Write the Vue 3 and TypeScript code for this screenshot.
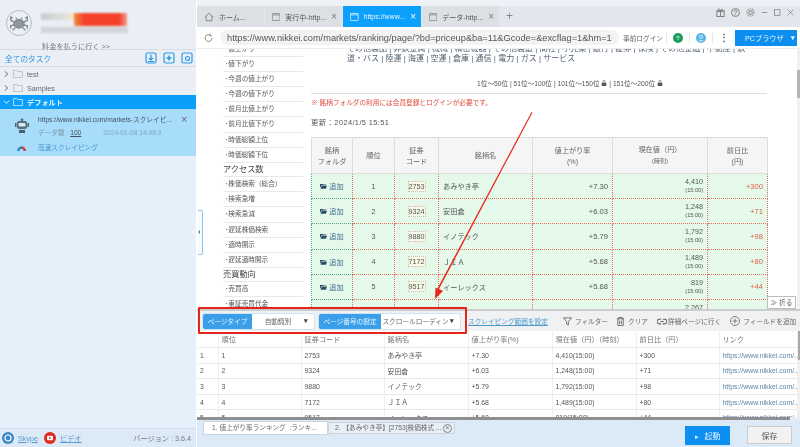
<template>
  <div class="app">
    <!-- 左サイドバー -->
    <aside class="side">
      <div class="user">
        <div class="avatar">
          <svg viewBox="0 0 26 26" width="24" height="24" fill="none" stroke="#7d8590" stroke-width="1.4">
            <ellipse cx="13" cy="14" rx="5.5" ry="4.5" fill="#8f969e" />
            <path d="M8 12 4 10V6M18 12l4-2V6M4 6l2 2M22 6l-2 2M8 15l-4 1v3M18 15l4 1v3M9 18l-3 3M17 18l3 3M10 9V7M16 9V7" />
          </svg>
        </div>
        <div class="user-body">
          <div class="name-row">
            <span class="mosaic-grey"></span>
            <span class="mosaic-red"></span>
          </div>
          <div class="mosaic-line"></div>
        </div>
        <div class="pay">料金を払うに行く &gt;&gt;</div>
      </div>

      <div class="all-tasks">
        <span>全てのタスク</span>
        <div class="task-icons">
          <svg v-for="n in 3" :key="n" viewBox="0 0 12 12" width="12" height="12" fill="none" stroke="#2a9ae6" stroke-width="1.2">
            <rect x="1" y="1" width="10" height="10" rx="1.5" />
            <path v-if="n === 1" d="M6 2.5v5M4 6l2 2 2-2M3 9.5h6" />
            <path v-if="n === 2" d="M6 3.5v5M3.5 6h5" stroke-width="1.5" />
            <circle v-if="n === 3" cx="6.5" cy="6.5" r="2" />
          </svg>
        </div>
      </div>

      <div v-for="f in folders" :key="f" class="folder">
        <svg class="chev" viewBox="0 0 8 8" width="7" height="8" fill="none" stroke="#666" stroke-width="1"><path d="M2 1l3.500 3L2 7" /></svg>
        <svg class="dir" viewBox="0 0 12 10" width="10" height="8" fill="none" stroke="#b5b5b5"><path d="M.5.500h4l1 1.500h6v7.500H.5z" /></svg>
        <span>{{ f }}</span>
      </div>
      <div class="folder folder-on">
        <svg class="chev" viewBox="0 0 8 8" width="7" height="8" fill="none" stroke="#fff" stroke-width="1"><path d="M1 2.500l3 3 3-3" /></svg>
        <svg class="dir" viewBox="0 0 12 10" width="10" height="8" fill="none" stroke="#d8f0ff"><path d="M.5.500h4l1 1.500h6v7.500H.5z" /></svg>
        <span>デフォルト</span>
      </div>

      <div class="task">
        <svg class="robot" viewBox="0 0 14 16" width="14" height="16">
          <circle cx="7" cy="1.800" r="1.300" fill="#4a6070" />
          <rect x="2" y="3" width="10" height="8" rx="2" fill="#56707f" />
          <rect x="3.500" y="5" width="7" height="3.500" rx="1" fill="#dce8ef" />
          <rect x="0" y="5" width="1.500" height="4" fill="#4a6070" />
          <rect x="12.500" y="5" width="1.500" height="4" fill="#4a6070" />
          <path d="M4 12h6v3H4z" fill="#4a6070" />
        </svg>
        <div class="task-url">https://www.nikkei.com/markets-スクレイピ...</div>
        <span class="task-x">×</span>
        <div class="task-meta">データ数 : <u>100</u><span class="task-date">2024-01-08 14:48:9</span></div>
        <div class="task-speed">
          <svg viewBox="0 0 12 10" width="11" height="9">
            <path d="M1 9a5 5 0 0 1 10 0H8.500a2.500 2.500 0 0 0-5 0z" fill="#2180c9" />
            <path d="M6 4a5 5 0 0 1 5 5H8.500A2.500 2.500 0 0 0 6 6.500z" fill="#e33b2e" />
          </svg>
          <span>高速スクレイピング</span>
        </div>
      </div>

      <div class="side-fill"></div>

      <div class="side-foot">
        <svg viewBox="0 0 12 12" width="12" height="12"><circle cx="6" cy="6" r="6" fill="#3c88c4" /><circle cx="6" cy="6" r="3" fill="none" stroke="#fff" stroke-width="1.200" /></svg>
        <a class="foot-link">Skype</a>
        <svg class="yt" viewBox="0 0 12 12" width="12" height="12"><circle cx="6" cy="6" r="6" fill="#e0281c" /><rect x="3" y="3.800" width="6" height="4.400" rx="1" fill="#fff" /><path d="M5.200 4.800 7.200 6l-2 1.200z" fill="#e0281c" /></svg>
        <a class="foot-link">ビデオ</a>
        <span class="version">バージョン : 3.6.4</span>
      </div>
    </aside>

    <div class="main">
      <!-- タブ -->
      <div class="tabs">
        <div v-for="t in tabs" :key="t.label" class="tab" :class="t.cls">
          <svg v-if="t.home" viewBox="0 0 12 12" width="10" height="10" fill="none" stroke="#777"><path d="M1 6 6 1.500 11 6M2.500 5v5.500h7V5" /></svg>
          <svg v-else viewBox="0 0 12 12" width="10" height="10" fill="none" :stroke="t.cls === 'tab-on' ? '#fff' : '#777'"><rect x=".5" y="1" width="11" height="10" rx="1" /><path d="M.5 3h11" /></svg>
          <span class="tab-label">{{ t.label }}</span>
          <span v-if="!t.home" class="tab-x">×</span>
        </div>
        <span class="plus">+</span>
        <div class="win">
          <svg viewBox="0 0 10 10" width="9" height="9" fill="none" stroke="#777"><rect x="1" y="3.500" width="8" height="6" /><path d="M.5 3.500h9M5 3.500v6M5 3C4 .5 2 .5 2.500 2S5 3 5 3s2-1.500 2.500-1S6 .5 5 3" /></svg>
          <svg viewBox="0 0 10 10" width="9" height="9" fill="none" stroke="#777"><circle cx="5" cy="5" r="4.400" /><path d="M3.600 4c0-2 2.800-2 2.800-.2C6.400 5 5 5 5 6.200M5 7v1" /></svg>
          <svg viewBox="0 0 10 10" width="9" height="9" fill="none" stroke="#999" stroke-width="1.400"><circle cx="5" cy="5" r="2" /><circle cx="5" cy="5" r="4" stroke-dasharray="1.500 1" /></svg>
          <svg viewBox="0 0 10 10" width="7" height="9" fill="none" stroke="#777"><path d="M1 5h8" /></svg>
          <svg viewBox="0 0 10 10" width="7" height="9" fill="none" stroke="#777"><rect x=".5" y="1" width="8" height="8" /></svg>
          <svg viewBox="0 0 10 10" width="7" height="9" fill="none" stroke="#777"><path d="M1 1l8 8M9 1l-8 8" /></svg>
        </div>
      </div>

      <!-- アドレスバー -->
      <div class="urlbar">
        <svg class="reload" viewBox="0 0 12 12" width="10" height="10" fill="none" stroke="#666"><path d="M10.500 6A4.500 4.500 0 1 1 8 2M8 .5V3h2.500" /></svg>
        <div class="url">
          <span>https://www.nikkei.com/markets/ranking/page/?bd=priceup&amp;ba=11&amp;Gcode=&amp;excflag=1&amp;hm=1</span>
          <svg viewBox="0 0 10 10" width="8" height="8" fill="none" stroke="#aaa"><path d="M1 9l1-3 5-5 2 2-5 5z" /></svg>
        </div>
        <span class="pre-login">事前ログイン</span>
        <i class="vsep vsep-first"></i>
        <svg class="dot" viewBox="0 0 10 10" width="10" height="10"><circle cx="5" cy="5" r="5" fill="#1d9c5c" /><path d="M3 4.500 5 3l2 1.500M5 3v4" fill="none" stroke="#bfe8d0" stroke-width=".8" /></svg>
        <i class="vsep"></i>
        <svg class="dot" viewBox="0 0 10 10" width="10" height="10"><circle cx="5" cy="5" r="5" fill="#58b6e4" /><circle cx="5" cy="3.800" r="1.500" fill="none" stroke="#e6f6ff" stroke-width=".8" /><path d="M2.800 7.800h4.400" stroke="#e6f6ff" stroke-width=".9" /></svg>
        <i class="vsep"></i>
        <span class="more">⋮</span>
        <div class="pc-btn"><span>PCブラウザ</span><b>▾</b></div>
      </div>

      <!-- ページ本体 -->
      <div class="page">
        <nav class="nav">
          <template v-for="n in nav" :key="n.text">
            <div v-if="n.head" class="nav-head">{{ n.text }}</div>
            <div v-else class="nav-item">･{{ n.text }}</div>
          </template>
        </nav>
        <div class="content">
          <p class="cats">その他製品 | 非鉄金属 | 機械 | 精密機器 | その他製造 | 商社 | 小売業 | 銀行 | 証券 | 保険 | その他金融 | 不動産 | 鉄<br />道・バス | 陸運 | 海運 | 空運 | 倉庫 | 通信 | 電力 | ガス | サービス</p>
          <p class="pager">
            1位～50位 | 51位～100位 | 101位～150位
            <svg viewBox="0 0 8 8" width="6" height="6" fill="#555"><path d="M1 3.500h6V8H1zM2.200 3.500V2a1.800 1.800 0 0 1 3.600 0v1.500H5V2a1 1 0 0 0-2 0v1.500z" /></svg>
            | 151位～200位
            <svg viewBox="0 0 8 8" width="6" height="6" fill="#555"><path d="M1 3.500h6V8H1zM2.200 3.500V2a1.800 1.800 0 0 1 3.600 0v1.500H5V2a1 1 0 0 0-2 0v1.500z" /></svg>
          </p>
          <p class="note">※ 銘柄フォルダの利用には会員登録とログインが必要です。</p>
          <p class="updated">更新：2024/1/5 15:51</p>
          <table class="rank">
            <colgroup><col v-for="w in rankCols" :key="w" :class="'w' + w" /></colgroup>
            <thead>
              <tr>
                <th>銘柄<br />フォルダ</th>
                <th>順位</th>
                <th>証券<br />コード</th>
                <th>銘柄名</th>
                <th>値上がり率<br />(%)</th>
                <th>現在値（円）<br /><small>(時刻)</small></th>
                <th>前日比<br />(円)</th>
              </tr>
            </thead>
            <tbody>
              <tr v-for="r in rows" :key="r.no">
                <td class="add">
                  <svg viewBox="0 0 10 8" width="7" height="6" fill="#2b4b63"><path d="M0 1h4l1 1h4v1H2L0 7zM2.500 3.500H10L8.500 8H.800z" /></svg>
                  追加
                </td>
                <td class="c">{{ r.no }}</td>
                <td class="c"><span class="code">{{ r.code }}</span></td>
                <td>{{ r.name }}</td>
                <td class="r num">{{ r.rate }}</td>
                <td class="r price">{{ r.price }}<small>(15:00)</small></td>
                <td class="r num up">{{ r.diff }}</td>
              </tr>
            </tbody>
          </table>
        </div>
        <div class="page-bar"><i></i></div>
        <div class="fold-btn">≫ 折る</div>
      </div>

      <!-- 下部パネル -->
      <div class="toolbar">
        <div class="sel">
          <span class="sel-label l1">ページタイプ</span>
          <span class="sel-val">自動識別</span>
          <b>▾</b>
        </div>
        <div class="sel sel2">
          <span class="sel-label l2">ページ番号の設定</span>
          <span class="sel-val">スクロールローディン</span>
          <b>▾</b>
        </div>
        <a class="range">スクレイピング範囲を設定</a>
        <div class="tool t-filter">
          <svg viewBox="0 0 10 10" width="9" height="9" fill="none" stroke="#666"><path d="M.5 1h9L6 5v4L4 8V5z" /></svg>フィルター
        </div>
        <div class="tool t-clear">
          <svg viewBox="0 0 10 10" width="9" height="9" fill="none" stroke="#666"><path d="M1 2h8M3 2V.5h4V2M2 2v7.500h6V2M4 4v4M6 4v4" /></svg>クリア
        </div>
        <div class="tool t-link">
          <svg viewBox="0 0 12 8" width="10" height="7" fill="none" stroke="#666" stroke-width="1.300"><path d="M5 1.200H3a2.800 2.800 0 0 0 0 5.600h2M7 1.200h2a2.800 2.800 0 0 1 0 5.600H7M4 4h4" /></svg>詳細ページに行く
        </div>
        <div class="tool t-add">
          <svg viewBox="0 0 10 10" width="10" height="10" fill="none" stroke="#666" stroke-width=".8"><circle cx="5" cy="5" r="4.500" /><path d="M5 2.500v5M2.500 5h5" /></svg>フィールドを追加
        </div>
      </div>

      <div class="grid-wrap">
        <table class="grid">
          <colgroup><col class="g0" /><col class="g1" /><col class="g1" /><col class="g2" /><col class="g2" /><col class="g2" /><col class="g1" /><col class="g3" /></colgroup>
          <thead>
            <tr><th></th><th>順位</th><th>証券コード</th><th>銘柄名</th><th>値上がり率(%)</th><th>現在値（円）（時刻）</th><th>前日比（円）</th><th>リンク</th></tr>
          </thead>
          <tbody>
            <tr v-for="r in rows.slice(0, 5)" :key="r.no">
              <td>{{ r.no }}</td>
              <td>{{ r.no }}</td>
              <td>{{ r.code }}</td>
              <td>{{ r.name }}</td>
              <td>{{ r.rate }}</td>
              <td>{{ r.price }}(15:00)</td>
              <td>{{ r.diff }}</td>
              <td class="lnk">https://www.nikkei.com/...</td>
            </tr>
          </tbody>
        </table>
        <div class="grid-vbar"><i></i></div>
      </div>
      <div class="grid-hbar"></div>

      <div class="foot">
        <div class="sheet sheet-on">1. 値上がり率ランキング &nbsp;:ランキ...</div>
        <div class="sheet">2. 【あみやき亭】[2753]株価株式 ...<span class="sheet-x">×</span></div>
        <button class="start"><span>▸</span>起動</button>
        <button class="save">保存</button>
      </div>
    </div>

    <!-- 注釈（赤枠と矢印）と折りたたみハンドル -->
    <div class="collapse"></div>
    <div class="red-box"></div>
    <svg class="arrow" viewBox="0 0 800 447" width="800" height="447">
      <polygon points="531.500,112 532.500,112.500 439,289 443,291 435,299 435.500,287.500 437.500,288.500" fill="#e8281c" />
    </svg>
  </div>
</template>

<script setup lang="ts">
interface Row {
  no: number
  code: string
  name: string
  rate: string
  price: string
  diff: string
}

interface Tab {
  label: string
  cls: string
  home?: boolean
}

const folders = ['test', 'Samples']

const tabs: Tab[] = [
  { label: 'ホーム...', cls: 'tab-home', home: true },
  { label: '実行中-http...', cls: 'tab-run' },
  { label: 'https://www...', cls: 'tab-on' },
  { label: 'データ-http...', cls: 'tab-data' },
]

const nav = [
  { text: '値上がり' },
  { text: '値下がり' },
  { text: '今週の値上がり' },
  { text: '今週の値下がり' },
  { text: '前月比値上がり' },
  { text: '前月比値下がり' },
  { text: '時価総額上位' },
  { text: '時価総額下位' },
  { text: 'アクセス数', head: true },
  { text: '株価検索（総合）' },
  { text: '検索急増' },
  { text: '検索急減' },
  { text: '遅延株価検索' },
  { text: '適時開示' },
  { text: '遅延適時開示' },
  { text: '売買動向', head: true },
  { text: '売買高' },
  { text: '東証売買代金' },
]

const rankCols = [41, 42, 44, 94, 80, 95, 60]

const rows: Row[] = [
  { no: 1, code: '2753', name: 'あみやき亭', rate: '+7.30', price: '4,410', diff: '+300' },
  { no: 2, code: '9324', name: '安田倉', rate: '+6.03', price: '1,248', diff: '+71' },
  { no: 3, code: '9880', name: 'イノテック', rate: '+5.79', price: '1,792', diff: '+98' },
  { no: 4, code: '7172', name: 'ＪＩＡ', rate: '+5.68', price: '1,489', diff: '+80' },
  { no: 5, code: '9517', name: 'イーレックス', rate: '+5.68', price: '819', diff: '+44' },
  { no: 6, code: '6547', name: 'グリムス', rate: '+5.67', price: '2,267', diff: '+121' },
]
</script>

<style>
html,
body {
  margin: 0;
  overflow: hidden;
}
</style>

<style scoped>
.app {
  position: relative;
  display: flex;
  width: 800px;
  height: 447px;
  overflow: hidden;
  background: #fff;
  color: #555;
  font-family: "Liberation Sans", "Noto Sans CJK JP", sans-serif;
  font-size: 7.2px;
  filter: blur(0.3px);
}

/* ── サイドバー ── */
.side {
  width: 196px;
  margin-right: 1px;
  flex-shrink: 0;
  display: flex;
  flex-direction: column;
  background: #eaeff6;
}

.user {
  position: relative;
  height: 50px;
  box-sizing: border-box;
  border-bottom: 1px solid #d8dce2;
  padding: 10px 0 0 6px;
  display: flex;
}

.avatar {
  width: 26px;
  height: 26px;
  box-sizing: border-box;
  border: 1px solid #bbb;
  border-radius: 50%;
  display: flex;
  align-items: center;
  justify-content: center;
  overflow: hidden;
  flex-shrink: 0;
}

.user-body {
  margin: 3px 0 0 9px;
  filter: blur(1px);
}

.name-row {
  display: flex;
  height: 11px;
}

.mosaic-grey {
  width: 33px;
  height: 7px;
  background: linear-gradient(90deg, #c9ccd0, #dcdcdc 60%, #f6e3c8);
}

.mosaic-red {
  width: 53px;
  height: 13px;
  background: linear-gradient(90deg, #ef8a3c, #f5402a 20%, #f5402a 85%, #f59a8c);
}

.mosaic-line {
  width: 87px;
  height: 6px;
  margin-top: 3px;
  background: #d2d5da;
}

.pay {
  position: absolute;
  left: 42px;
  top: 41px;
  color: #777;
}

.all-tasks {
  height: 17px;
  box-sizing: border-box;
  border-bottom: 1px solid #d8dce2;
  padding: 0 3px 0 5px;
  display: flex;
  align-items: center;
  justify-content: space-between;
  color: #2a9ae6;
  font-size: 7.7px;
}

.task-icons {
  display: flex;
  gap: 6px;
}

.folder {
  height: 14px;
  display: flex;
  align-items: center;
  padding-left: 3px;
  color: #666;
}

.chev {
  margin-right: 3px;
}

.dir {
  margin-right: 4px;
}

.folder-on {
  background: #0b9ffb;
  color: #e8f6ff;
  font-weight: 700;
}

.task {
  position: relative;
  height: 47px;
  box-sizing: border-box;
  background: #a7dcfb;
  padding: 5px 0 0 38px;
  font-size: 6.67px;
}

.robot {
  position: absolute;
  left: 15px;
  top: 9px;
}

.task-url {
  color: #44525f;
  line-height: 11px;
  white-space: nowrap;
}

.task-x {
  position: absolute;
  left: 181px;
  top: 4px;
  font-size: 11px;
  color: #667;
}

.task-meta {
  margin-top: 3px;
  color: #7c95a8;
  line-height: 10px;
}

.task-meta u {
  color: #44525f;
}

.task-date {
  margin-left: 22px;
  color: #86a6bd;
}

.task-speed {
  margin: 4px 0 0 -22px;
  height: 10px;
  display: flex;
  align-items: center;
  gap: 11px;
  color: #4a97cc;
}

.side-fill {
  flex: 1;
  background: #e6f0fa;
}

.side-foot {
  height: 18px;
  border-top: 1px solid #cddff0;
  background: #dce9f6;
  display: flex;
  align-items: center;
  padding: 0 5px 0 2px;
}

.foot-link {
  margin-left: 4px;
  color: #5a9ad0;
  text-decoration: underline;
}

.yt {
  margin-left: 6px;
}

.version {
  margin-left: auto;
  color: #777;
}

/* ── タブ ── */
.main {
  flex: 1;
  min-width: 0;
  display: flex;
  flex-direction: column;
}

.tabs {
  height: 27px;
  box-sizing: border-box;
  padding-top: 6px;
  display: flex;
  background: linear-gradient(#eef1f6 6px, #e3e7ed 6px);
}

.tab {
  height: 21px;
  box-sizing: border-box;
  margin-right: 1px;
  padding: 0 5px 0 7px;
  display: flex;
  align-items: center;
  gap: 5px;
  background: #dcdfe4;
  color: #555;
  font-size: 7px;
}

.tab-home {
  width: 67px;
}

.tab-run {
  width: 77px;
}

.tab-on {
  width: 78px;
  background: #0ba0fb;
  color: #e5f5ff;
}

.tab-data {
  width: 77px;
}

.tab-label {
  flex: 1;
  white-space: nowrap;
}

.tab-x {
  font-size: 10px;
  color: #777;
}

.tab-on .tab-x {
  color: #fff;
}

.plus {
  margin: 3px 0 0 6px;
  font-size: 12px;
  color: #888;
}

.win {
  margin-left: auto;
  height: 12px;
  padding-right: 6px;
  display: flex;
  align-items: center;
  gap: 6px;
}

/* ── アドレスバー ── */
.urlbar {
  height: 22px;
  flex-shrink: 0;
  box-sizing: border-box;
  background: #fff;
  border-bottom: 1px solid #eee;
  display: flex;
  align-items: center;
  padding: 0 3px 0 7px;
}

.reload {
  margin-right: 7px;
}

.url {
  width: 399px;
  height: 15px;
  flex-shrink: 0;
  box-sizing: border-box;
  border-radius: 8px;
  background: #f3f3f3;
  padding: 0 6px 0 7px;
  display: flex;
  align-items: center;
  justify-content: space-between;
  color: #555;
  font-size: 9.25px;
  white-space: nowrap;
}

.pre-login {
  margin-left: 4px;
  color: #666;
  font-size: 6.67px;
  white-space: nowrap;
}

.vsep {
  width: 1px;
  height: 10px;
  margin: 0 6px;
  flex-shrink: 0;
  background: #e4e4e4;
}

.vsep-first {
  margin-left: 3px;
}

.dot {
  flex-shrink: 0;
}

.more {
  width: 8px;
  margin-right: 8px;
  text-align: center;
  font-size: 10px;
  font-weight: 700;
  color: #555;
}

.pc-btn {
  width: 62px;
  height: 16px;
  flex-shrink: 0;
  background: #0c8ff0;
  color: #e8f5ff;
  display: flex;
  align-items: center;
  justify-content: space-between;
  padding: 0 2px 0 10px;
  box-sizing: border-box;
}

/* ── ページ ── */
.page {
  position: relative;
  height: 260px;
  flex-shrink: 0;
  display: flex;
  overflow: hidden;
  background: #fff;
}

.nav {
  width: 80px;
  margin: -7px 0 0 26px;
  flex-shrink: 0;
}

.nav-item {
  height: 15.1px;
  box-sizing: border-box;
  border-bottom: 1px solid #e8e8e8;
  padding-left: 2px;
  line-height: 14px;
  font-size: 6.67px;
  color: #555;
  white-space: nowrap;
}

.nav-head {
  height: 13.5px;
  line-height: 14px;
  font-size: 8.2px;
  color: #444;
  border-bottom: 1px solid #e8e8e8;
}

.content {
  width: 456px;
  margin: -5px 0 0 8px;
  flex-shrink: 0;
}

.content p {
  margin: 0;
}

.content .cats {
  line-height: 10px;
  font-size: 8px;
  color: #4f5f70;
  padding-left: 36px;
  height: 20px;
  white-space: nowrap;
}

.content .pager {
  padding: 15px 0 4px 62px;
  border-bottom: 1px solid #ddd;
  text-align: center;
  font-size: 6.67px;
  line-height: 10px;
  color: #555;
}

.content .note {
  margin-top: 4px;
  color: #e0493c;
  font-size: 6.67px;
  line-height: 10px;
}

.content .updated {
  margin-top: 10px;
  font-size: 7.4px;
  letter-spacing: 0.4px;
  line-height: 10px;
  color: #555;
}

.rank {
  margin-top: 9px;
  width: 456px;
  table-layout: fixed;
  border-collapse: collapse;
  color: #555;
}

.w41 { width: 41px; }
.w42 { width: 42px; }
.w44 { width: 44px; }
.w94 { width: 94px; }
.w80 { width: 80px; }
.w95 { width: 95px; }
.w60 { width: 60px; }

.rank th {
  height: 35px;
  padding: 0;
  background: #f5f5f5;
  border: 1px solid #dcdcdc;
  font-weight: 400;
  line-height: 11px;
  color: #666;
}

.rank th small {
  font-size: 6px;
}

.rank td {
  height: 24.2px;
  padding: 0 4px;
  background: #e4f9ea;
  border: 1px dotted #e4705f;
  white-space: nowrap;
}

.rank td.add {
  border-color: #4cae73;
  border-right-color: #e4705f;
  text-align: center;
  color: #3f6d8f;
  padding: 0;
}

.c {
  text-align: center;
}

.code {
  outline: 1px dotted #e9b9a0;
  background: #f4f9e8;
}

.r {
  text-align: right;
}

.num {
  font-size: 7.6px;
}

.price {
  line-height: 8px;
}

.price small {
  display: block;
  font-size: 5.6px;
}

.up {
  color: #e2604a;
}

.page-bar {
  position: absolute;
  right: 0;
  top: 0;
  bottom: 0;
  width: 3px;
  background: #eef1f6;
}

.page-bar i {
  display: block;
  margin-top: 21px;
  height: 28px;
  background: #b5b5b5;
}

.fold-btn {
  position: absolute;
  right: 4px;
  top: 247px;
  width: 29px;
  height: 13px;
  box-sizing: border-box;
  border: 1px solid #bbb;
  background: #fff;
  color: #666;
  font-size: 6.67px;
  line-height: 11px;
  text-align: center;
}

/* ── ツールバー ── */
.toolbar {
  height: 22px;
  flex-shrink: 0;
  box-sizing: border-box;
  background: #f0f1f3;
  border-top: 2px solid #ccc;
  display: flex;
  align-items: center;
  padding-left: 6px;
  position: relative;
  font-size: 6.67px;
}

.sel {
  width: 111px;
  height: 15px;
  flex-shrink: 0;
  display: flex;
  align-items: center;
  background: #fff;
  border-radius: 2px;
  box-shadow: 0 0 0 1px #cfe3f5;
}

.sel2 {
  width: 141px;
  margin-left: 5px;
}

.sel-label {
  height: 100%;
  flex-shrink: 0;
  display: flex;
  align-items: center;
  justify-content: center;
  background: #3a9ee8;
  color: #e8f5ff;
  border-radius: 2px 0 0 2px;
}

.l1 {
  width: 49px;
}

.l2 {
  width: 62px;
}

.sel-val {
  flex: 1;
  text-align: center;
  color: #666;
  white-space: nowrap;
}

.sel b {
  width: 10px;
  flex-shrink: 0;
  color: #444;
  font-size: 7px;
}

.range {
  margin-left: 8px;
  color: #4a9ad0;
  text-decoration: underline;
  white-space: nowrap;
}

.tool {
  display: flex;
  align-items: center;
  gap: 3px;
  color: #666;
  white-space: nowrap;
  flex-shrink: 0;
}

.t-filter {
  margin-left: 15px;
}

.t-clear {
  margin-left: 8px;
}

.t-link {
  margin-left: 9px;
  gap: 1px;
}

.t-add {
  margin-left: 9px;
}

/* ── データ表 ── */
.grid-wrap {
  height: 86px;
  flex-shrink: 0;
  display: flex;
  overflow: hidden;
}

.grid {
  width: 600px;
  height: 94px;
  flex-shrink: 0;
  table-layout: fixed;
  border-collapse: collapse;
  background: #fff;
  font-size: 6.9px;
  color: #555;
}

.g0 { width: 21px; }
.g1 { width: 83px; }
.g2 { width: 84px; }
.g3 { width: 78px; }

.grid th {
  height: 16px;
  padding: 0 0 0 3px;
  border-right: 1px solid #f0f0f0;
  border-bottom: 1px solid #e8e8e8;
  text-align: left;
  font-weight: 400;
  font-size: 7.2px;
  color: #777;
  white-space: nowrap;
}

.grid td {
  height: 14.6px;
  padding: 0 0 0 3px;
  border-right: 1px solid #f0f0f0;
  border-bottom: 1px solid #e8e8e8;
  white-space: nowrap;
}

.grid td.lnk {
  color: #5d84a8;
}

.grid-vbar {
  width: 3px;
  background: #f0f0f0;
}

.grid-vbar i {
  display: block;
  height: 29px;
  background: #a8a8a8;
}

.grid-hbar {
  height: 3px;
  flex-shrink: 0;
  background: linear-gradient(90deg, #8f8f8f 98.4%, #eee 98.4%);
}

/* ── フッター ── */
.foot {
  flex: 1;
  display: flex;
  align-items: flex-start;
  background: #dce9f6;
  padding-left: 6px;
  position: relative;
  font-size: 6.67px;
}

.sheet {
  width: 127px;
  height: 12px;
  margin-top: 2px;
  box-sizing: border-box;
  background: #e9eff6;
  border: 1px solid #ccd5de;
  padding-left: 6px;
  line-height: 10px;
  color: #666;
  white-space: nowrap;
  position: relative;
}

.sheet-on {
  width: 125px;
  height: 14px;
  margin-top: 1px;
  background: #fff;
  line-height: 12px;
  padding-left: 8px;
}

.sheet-x {
  position: absolute;
  right: 2px;
  top: 1px;
  width: 7px;
  height: 7px;
  border: 1px solid #888;
  border-radius: 50%;
  line-height: 6px;
  text-align: center;
}

.start {
  width: 45px;
  height: 19px;
  margin: 6px 0 0 auto;
  border: 0;
  padding: 0;
  background: #0c8ff0;
  color: #dff1ff;
  font: inherit;
  font-size: 8px;
}

.start span {
  margin-right: 6px;
  font-size: 7px;
}

.save {
  width: 45px;
  height: 18px;
  margin: 6px 8px 0 17px;
  border: 1px solid #ccc;
  padding: 0;
  background: #f2f2f2;
  color: #555;
  font: inherit;
  font-size: 8px;
}

/* ── 注釈 ── */
.collapse {
  position: absolute;
  left: 198px;
  top: 210px;
  width: 5px;
  height: 45px;
  box-sizing: border-box;
  border: 1px solid #8cc4ee;
  border-left: 0;
  border-radius: 0 2px 2px 0;
  background: #f5faff;
}

.collapse::after {
  content: "";
  position: absolute;
  left: 0;
  top: 19px;
  border: 2px solid transparent;
  border-right-color: #3a8fd0;
  border-left: 0;
}

.red-box {
  position: absolute;
  left: 198px;
  top: 307px;
  width: 269px;
  height: 27px;
  box-sizing: border-box;
  border: 2px solid #e4251b;
  border-radius: 1px;
  pointer-events: none;
}

.arrow {
  position: absolute;
  left: 0;
  top: 0;
  pointer-events: none;
}
</style>
